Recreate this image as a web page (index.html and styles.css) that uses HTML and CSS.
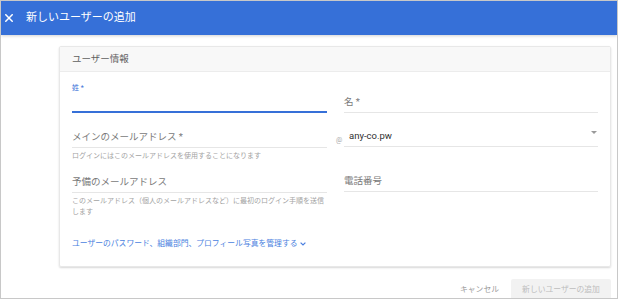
FILE: index.html
```html
<!DOCTYPE html>
<html lang="ja">
<head>
    <meta charset="UTF-8">
    <meta name="viewport" content="width=device-width, initial-scale=1.0">
    <title>新しいユーザーの追加</title>
    <link rel="stylesheet" href="styles.css">
</head>
<body>
    <div class="frame">
        <header class="app-bar">
            <button class="close-btn" aria-label="閉じる">
                <svg width="8" height="8" viewBox="0 0 8 8" fill="none" stroke="currentColor" stroke-width="1.5" stroke-linecap="square">
                    <path d="M0.8 0.8L7.2 7.2M7.2 0.8L0.8 7.2"/>
                </svg>
            </button>
            <h1 class="app-title">新しいユーザーの追加</h1>
        </header>

        <main class="main">
            <section class="card">
                <div class="card-header">ユーザー情報</div>
                <div class="card-body">
                    <div class="form-row">
                        <div class="cell">
                            <div class="field field-tall is-focused">
                                <span class="float-label">姓 *</span>
                            </div>
                        </div>
                        <div class="cell">
                            <div class="field field-tall">
                                <span class="placeholder">名 *</span>
                            </div>
                        </div>
                    </div>

                    <div class="form-row row-second">
                        <div class="cell">
                            <div class="field">
                                <span class="placeholder">メインのメールアドレス *</span>
                            </div>
                            <p class="helper">ログインにはこのメールアドレスを使用することになります</p>
                        </div>
                        <div class="cell">
                            <div class="field field-select">
                                <span class="at-sign">@</span>
                                <span class="value">any-co.pw</span>
                                <span class="select-arrow"></span>
                            </div>
                        </div>
                    </div>

                    <div class="form-row row-third">
                        <div class="cell">
                            <div class="field">
                                <span class="placeholder">予備のメールアドレス</span>
                            </div>
                            <p class="helper">このメールアドレス（個人のメールアドレスなど）に最初のログイン手順を送信します</p>
                        </div>
                        <div class="cell">
                            <div class="field field-short">
                                <span class="placeholder">電話番号</span>
                            </div>
                        </div>
                    </div>

                    <a href="#" class="more-link">
                        ユーザーのパスワード、組織部門、プロフィール写真を管理する
                        <svg width="6" height="4" viewBox="0 0 6 4" fill="none" stroke="currentColor" stroke-width="1.2">
                            <path d="M0.6 0.6L3 3L5.4 0.6"/>
                        </svg>
                    </a>
                </div>
            </section>

            <div class="actions">
                <button class="btn btn-text">キャンセル</button>
                <button class="btn btn-primary" disabled>新しいユーザーの追加</button>
            </div>
        </main>
    </div>
</body>
</html>
```

FILE: styles.css
```css
:root {
    --blue: #3670d8;
    --link-blue: #4a7fe0;
    --line: #e6e6e6;
    --placeholder: #7a7a7a;
    --hint: #a3a3a3;
    --text: #303030;
}

* {
    margin: 0;
    padding: 0;
    box-sizing: border-box;
}

body {
    font-family: Roboto, "Noto Sans CJK JP", sans-serif;
    background-color: #ffffff;
    color: var(--text);
}

.frame {
    width: 618px;
    height: 299px;
    border: 1px solid #c8c8c8;
    overflow: hidden;
}

.app-bar {
    display: flex;
    align-items: center;
    gap: 13px;
    height: 34px;
    padding-left: 4px;
    background-color: var(--blue);
    color: white;
    box-shadow: 0 1px 3px rgba(0, 0, 0, 0.18);
    position: relative;
}

.close-btn {
    display: flex;
    background: none;
    border: none;
    color: white;
    cursor: pointer;
}

.app-title {
    font-size: 11px;
    font-weight: 400;
    line-height: 14px;
}

.main {
    padding: 11px 6px 0 58px;
}

.card {
    border: 1px solid #e8e8e8;
    border-radius: 2px;
    box-shadow: 0 1px 2px rgba(0, 0, 0, 0.16);
}

.card-header {
    height: 25px;
    padding-left: 12px;
    background-color: #f8f8f8;
    border-bottom: 1px solid #ececec;
    font-size: 9.5px;
    line-height: 24px;
    color: #606060;
}

.card-body {
    padding: 11px 12px 16px 12px;
}

.form-row {
    display: grid;
    grid-template-columns: 255px 254px;
    column-gap: 17px;
}

.row-second {
    margin-top: 11px;
}

.row-third {
    margin-top: 7px;
}

.field {
    position: relative;
    display: flex;
    flex-direction: column;
    justify-content: flex-end;
    height: 24px;
    padding-bottom: 3px;
    border-bottom: 1px solid var(--line);
}

.field-tall {
    height: 30px;
}

.field-short {
    height: 23px;
}

.field.is-focused {
    justify-content: flex-start;
    border-bottom: 2px solid var(--blue);
}

.float-label {
    font-size: 7px;
    line-height: 10px;
    color: var(--blue);
}

.placeholder {
    font-size: 9.5px;
    line-height: 14px;
    color: var(--placeholder);
}

.helper {
    margin-top: 3px;
    font-size: 7px;
    line-height: 11px;
    color: var(--hint);
}

.field-select {
    flex-direction: row;
    align-items: flex-end;
    justify-content: space-between;
    height: 23px;
    padding-left: 5px;
}

.value {
    font-size: 9.5px;
    line-height: 14px;
    color: var(--text);
}

.at-sign {
    position: absolute;
    left: -8px;
    bottom: 1px;
    font-size: 7px;
    line-height: 10px;
    color: #a8a8a8;
}

.select-arrow {
    width: 0;
    height: 0;
    margin: 0 1px 9px 0;
    border-left: 3.5px solid transparent;
    border-right: 3.5px solid transparent;
    border-top: 3.5px solid #9a9a9a;
}

.more-link {
    display: inline-flex;
    align-items: center;
    gap: 3px;
    margin-top: 20px;
    font-size: 7.8px;
    line-height: 12px;
    color: var(--link-blue);
    text-decoration: none;
}

.actions {
    display: flex;
    justify-content: flex-end;
    margin-top: 12px;
}

.btn {
    height: 22px;
    padding: 0 10px;
    border: none;
    border-radius: 2px;
    background: none;
    font-family: Roboto, "Noto Sans CJK JP", sans-serif;
    font-size: 7.8px;
    line-height: 20px;
    cursor: pointer;
}

.btn-text {
    color: #9a9a9a;
    padding: 0 12px 0 10px;
}

.btn-primary {
    width: 100px;
    background-color: #f2f2f2;
    color: #bdbdbd;
    cursor: default;
}
```
